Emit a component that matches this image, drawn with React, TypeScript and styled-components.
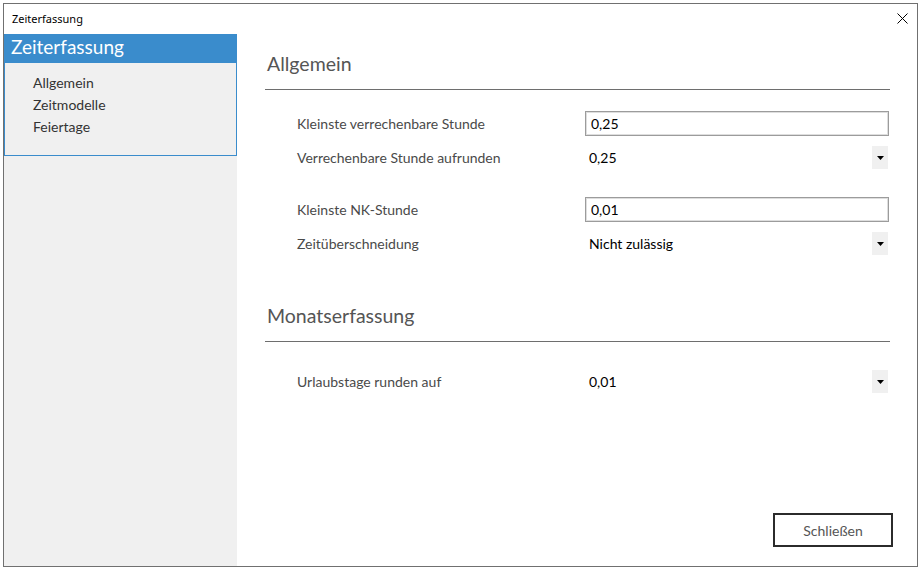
import * as React from 'react';
import styled, { createGlobalStyle } from 'styled-components';

const GlobalStyle = createGlobalStyle`
    html, body {
        margin: 0;
        padding: 0;
        background: #ffffff;
    }
    body {
        font-family: Lato, "Noto Sans", sans-serif;
    }
`;

const Window = styled.div`
    box-sizing: border-box;
    margin: 3px;
    width: 915px;
    height: 564px;
    border: 1px solid #707070;
    display: flex;
    flex-direction: column;
    background: #ffffff;
`;

const TitleBar = styled.div`
    height: 30px;
    display: flex;
    align-items: center;
    justify-content: space-between;
    padding: 0 8px 1px 8px;
    box-sizing: border-box;
    font-family: "Noto Sans", "Liberation Sans", sans-serif;
    font-size: 11px;
    color: #000000;
    flex-shrink: 0;
`;

const CloseButton = styled.button`
    border: none;
    background: transparent;
    padding: 0;
    width: 14px;
    height: 14px;
    display: flex;
    align-items: center;
    justify-content: center;
    cursor: pointer;
`;

const Body = styled.div`
    flex: 1;
    display: flex;
    min-height: 0;
`;

const Sidebar = styled.aside`
    width: 233px;
    background: #f0f0f0;
    flex-shrink: 0;
`;

const NavBox = styled.nav`
    border: 1px solid #3a8ccc;
    border-top: none;
`;

const NavHeader = styled.div`
    height: 29px;
    background: #3a8ccc;
    color: #ffffff;
    font-size: 19px;
    line-height: 26px;
    padding-left: 6px;
`;

const NavList = styled.ul`
    list-style: none;
    margin: 0;
    padding: 9px 0 17px 28px;
`;

const NavItem = styled.li`
    font-size: 14px;
    line-height: 22px;
    color: #333333;
    cursor: pointer;
`;

const Main = styled.main`
    flex: 1;
    display: flex;
    flex-direction: column;
    padding: 0 27px 19px 28px;
`;

const Section = styled.section<{ $top: number }>`
    margin-top: ${(p) => p.$top}px;
`;

const SectionHeading = styled.h2`
    margin: 0;
    padding: 17px 2px 12px;
    font-size: 19.5px;
    line-height: 26px;
    font-weight: normal;
    color: #555555;
    border-bottom: 1px solid #6e6e6e;
`;

const Rows = styled.div<{ $top: number }>`
    display: flex;
    flex-direction: column;
    padding-top: ${(p) => p.$top}px;
`;

const Group = styled.div`
    display: flex;
    flex-direction: column;
    gap: 9px;
    & + & {
        margin-top: 27px;
    }
`;

const Row = styled.div`
    display: flex;
    align-items: center;
    height: 25px;
    padding-left: 32px;
    padding-right: 1px;
`;

const Label = styled.label`
    width: 288px;
    flex-shrink: 0;
    font-size: 14px;
    line-height: 17px;
    padding-bottom: 1px;
    color: #4a4a4a;
`;

const TextInput = styled.input`
    box-sizing: border-box;
    flex: 1;
    height: 25px;
    border: 1px solid #9c9c9c;
    box-shadow: inset 0 0 0 1px #dedede;
    padding: 0 5px 1px;
    font-family: inherit;
    font-size: 14px;
    color: #000000;
    outline: none;
`;

const Select = styled.div`
    flex: 1;
    display: flex;
    align-items: center;
    justify-content: space-between;
    height: 23px;
    padding-left: 4px;
    font-size: 14px;
    color: #000000;
    margin-right: 1px;
`;

const SelectValue = styled.span`
    line-height: 17px;
    padding-bottom: 1px;
`;

const Arrow = styled.span`
    width: 16px;
    height: 23px;
    background: #f0f0f0;
    display: flex;
    align-items: center;
    justify-content: center;
`;

const Footer = styled.div`
    margin-top: auto;
    display: flex;
    justify-content: flex-end;
    margin-right: -3px;
`;

const CloseAction = styled.button`
    box-sizing: border-box;
    width: 120px;
    height: 34px;
    border: 2px solid #2b2b2b;
    background: #ffffff;
    font-family: inherit;
    font-size: 14px;
    color: #555555;
    cursor: pointer;
`;

const Dropdown: React.FC<{ value: string }> = ({ value }) => (
    <Select>
        <SelectValue>{value}</SelectValue>
        <Arrow>
            <svg width="7" height="4" viewBox="0 0 7 4">
                <path d="M0 0h7L3.5 4z" fill="#000" />
            </svg>
        </Arrow>
    </Select>
);

const App: React.FC = () => (
    <>
        <GlobalStyle />
        <Window>
            <TitleBar>
                <span>Zeiterfassung</span>
                <CloseButton aria-label="close">
                    <svg width="11" height="11" viewBox="0 0 11 11">
                        <path d="M0.5 0.5L10.5 10.5M10.5 0.5L0.5 10.5" stroke="#000" strokeWidth="1" />
                    </svg>
                </CloseButton>
            </TitleBar>
            <Body>
                <Sidebar>
                    <NavBox>
                        <NavHeader>Zeiterfassung</NavHeader>
                        <NavList>
                            <NavItem>Allgemein</NavItem>
                            <NavItem>Zeitmodelle</NavItem>
                            <NavItem>Feiertage</NavItem>
                        </NavList>
                    </NavBox>
                </Sidebar>
                <Main>
                    <Section $top={0}>
                        <SectionHeading>Allgemein</SectionHeading>
                        <Rows $top={21}>
                            <Group>
                                <Row>
                                    <Label>Kleinste verrechenbare Stunde</Label>
                                    <TextInput defaultValue="0,25" />
                                </Row>
                                <Row>
                                    <Label>Verrechenbare Stunde aufrunden</Label>
                                    <Dropdown value="0,25" />
                                </Row>
                            </Group>
                            <Group>
                                <Row>
                                    <Label>Kleinste NK-Stunde</Label>
                                    <TextInput defaultValue="0,01" />
                                </Row>
                                <Row>
                                    <Label>Zeitüberschneidung</Label>
                                    <Dropdown value="Nicht zulässig" />
                                </Row>
                            </Group>
                        </Rows>
                    </Section>
                    <Section $top={30}>
                        <SectionHeading>Monatserfassung</SectionHeading>
                        <Rows $top={27}>
                            <Group>
                                <Row>
                                    <Label>Urlaubstage runden auf</Label>
                                    <Dropdown value="0,01" />
                                </Row>
                            </Group>
                        </Rows>
                    </Section>
                    <Footer>
                        <CloseAction>Schließen</CloseAction>
                    </Footer>
                </Main>
            </Body>
        </Window>
    </>
);

export default App;
